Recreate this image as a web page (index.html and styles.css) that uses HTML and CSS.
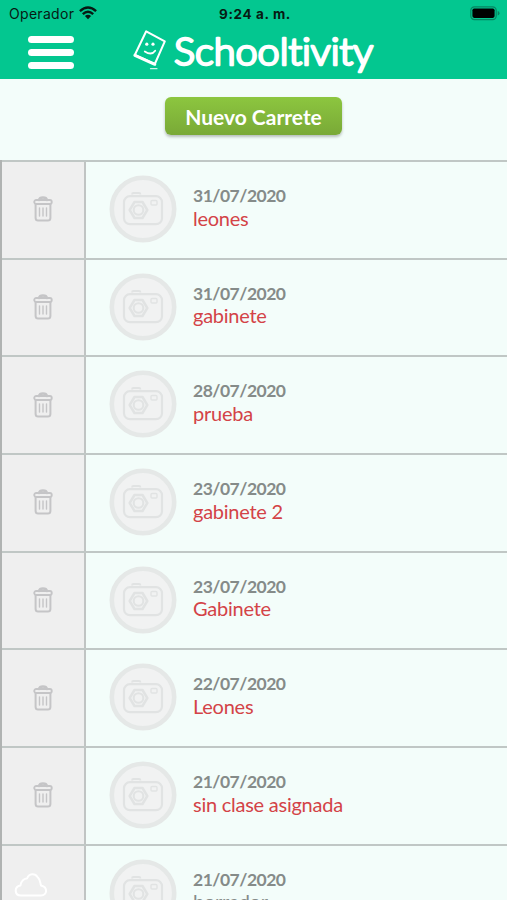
FILE: index.html
```html
<!DOCTYPE html>
<html lang="es">
  <head>
    <meta charset="UTF-8" />
    <meta name="viewport" content="width=device-width, initial-scale=1.0" />
    <title>Schooltivity</title>
    <link rel="stylesheet" href="styles.css">
  </head>
  <body>
    <svg class="symbols" width="0" height="0">
      <symbol id="trash" viewBox="0 0 20 26">
        <g fill="none" stroke="#c5c5c7" stroke-linecap="round" stroke-linejoin="round">
          <path d="M6 4 Q6.5 1.5 10 1.5 T14 4" stroke-width="2.4" />
          <rect x="1.2" y="4" width="17.6" height="4" rx="2" stroke-width="1.8" />
          <path d="M2.6 8.5 V22 Q2.6 24.5 5.1 24.5 H14.9 Q17.4 24.5 17.4 22 V8.5" stroke-width="2" />
          <path d="M6.5 12 V20 M10 12 V20 M13.5 12 V20" stroke-width="1.4" />
        </g>
      </symbol>
      <symbol id="camera" viewBox="0 0 68 68">
        <circle cx="34" cy="34" r="31.2" fill="#f1f2f2" stroke="#e5e8e7" stroke-width="4.6" />
        <g fill="none" stroke="#e1e3e3">
          <path d="M23 19.5 Q23 18 24.5 18 H30 Q31.5 18 31.5 19.5" stroke-width="1.8" />
          <rect x="15" y="21.2" width="38" height="28" rx="6" stroke-width="2.2" />
          <path d="M25.5 27 H33.5 L38.3 35 L33.5 43 H25.5 L20.7 35 Z" stroke-width="2.5" stroke-linejoin="round" />
          <circle cx="29.5" cy="35" r="4.8" stroke-width="2.1" />
          <rect x="42" y="25.5" width="6" height="4.5" rx="1" stroke-width="1.4" />
        </g>
      </symbol>
    </svg>

    <header class="header">
      <div class="status-bar">
        <div class="carrier">
          <span>Operador</span>
          <svg class="wifi" width="18" height="14" viewBox="0 0 18 14">
            <g fill="none" stroke="#071a13" stroke-width="2.4">
              <path d="M.9 5.1 Q9-2.3 17.1 5.1" />
              <path d="M3.8 8.2 Q9 3.5 14.2 8.2" />
            </g>
            <path d="M5.9 10 Q9 7.5 12.1 10 L9 13.3 Z" fill="#071a13" />
          </svg>
        </div>
        <span class="clock">9:24 a. m.</span>
        <svg class="battery" width="31" height="15" viewBox="0 0 31 15">
          <rect x=".8" y=".8" width="25.4" height="12.8" rx="3.6" fill="none" stroke="#078561" stroke-width="1.2" />
          <rect x="2.4" y="2.5" width="22.2" height="9.4" rx="1.8" fill="#000" />
          <path d="M27.7 5 Q29.5 5.5 29.5 7.2 T27.7 9.4 Z" fill="#078561" />
        </svg>
      </div>
      <div class="nav">
        <button class="menu" aria-label="Menu">
          <span></span>
          <span></span>
          <span></span>
        </button>
        <svg class="logo" width="250" height="54" viewBox="0 0 250 54">
          <g fill="none" stroke="#fff" stroke-linecap="round" stroke-linejoin="round">
            <path d="M16.2 6.3 L34.8 16.3 L24.8 39 L4.8 30 Z" stroke-width="2" />
            <path d="M4.9 30.4 L24.8 39.3" stroke-width="3" />
            <path d="M14.8 26.4 Q21.5 31 25.2 25.8" stroke-width="1.8" />
            <path d="M20.5 43.7 H27" stroke-width="1.2" opacity=".8" />
          </g>
          <circle cx="16.8" cy="19.2" r="1.6" fill="#fff" />
          <circle cx="23" cy="19.2" r="1.6" fill="#fff" />
          <text class="logo-text" x="44" y="40" textLength="199" lengthAdjust="spacingAndGlyphs">Schooltivity</text>
        </svg>
      </div>
    </header>

    <div class="actions">
      <button class="new-button">Nuevo Carrete</button>
    </div>

    <ul class="list">
      <li class="row">
        <div class="delete"><svg class="trash"><use href="#trash" /></svg></div>
        <svg class="camera"><use href="#camera" /></svg>
        <div class="info"><span class="date">31/07/2020</span><span class="name">leones</span></div>
      </li>
      <li class="row">
        <div class="delete"><svg class="trash"><use href="#trash" /></svg></div>
        <svg class="camera"><use href="#camera" /></svg>
        <div class="info"><span class="date">31/07/2020</span><span class="name">gabinete</span></div>
      </li>
      <li class="row">
        <div class="delete"><svg class="trash"><use href="#trash" /></svg></div>
        <svg class="camera"><use href="#camera" /></svg>
        <div class="info"><span class="date">28/07/2020</span><span class="name">prueba</span></div>
      </li>
      <li class="row">
        <div class="delete"><svg class="trash"><use href="#trash" /></svg></div>
        <svg class="camera"><use href="#camera" /></svg>
        <div class="info"><span class="date">23/07/2020</span><span class="name">gabinete 2</span></div>
      </li>
      <li class="row">
        <div class="delete"><svg class="trash"><use href="#trash" /></svg></div>
        <svg class="camera"><use href="#camera" /></svg>
        <div class="info"><span class="date">23/07/2020</span><span class="name">Gabinete</span></div>
      </li>
      <li class="row">
        <div class="delete"><svg class="trash"><use href="#trash" /></svg></div>
        <svg class="camera"><use href="#camera" /></svg>
        <div class="info"><span class="date">22/07/2020</span><span class="name">Leones</span></div>
      </li>
      <li class="row">
        <div class="delete"><svg class="trash"><use href="#trash" /></svg></div>
        <svg class="camera"><use href="#camera" /></svg>
        <div class="info"><span class="date">21/07/2020</span><span class="name">sin clase asignada</span></div>
      </li>
      <li class="row">
        <div class="delete cloud-cell">
          <svg class="cloud" width="34" height="26" viewBox="0 0 34 26">
            <path d="M7 23.5 C0 23.5 0 14.5 6.5 13.5 C7 8 11 6.5 13 6.5 C15 1 21 1 23.5 5 C26 7 26 10 27 13.5 C34 15 33.5 23.5 27 23.5 Z" fill="none" stroke="#fff" stroke-width="2" stroke-linejoin="round" />
          </svg>
        </div>
        <svg class="camera"><use href="#camera" /></svg>
        <div class="info"><span class="date">21/07/2020</span><span class="name draft">borrador</span></div>
      </li>
    </ul>
  </body>
</html>
```

FILE: styles.css
```css
* {
  box-sizing: border-box;
}

body {
  margin: 0;
  height: 900px;
  overflow: hidden;
  font-family: Lato, sans-serif;
  background: #f3fdfa;
}

.symbols {
  display: block;
  height: 0;
}

.header {
  height: 79px;
  background: #03c790;
}

.status-bar {
  display: grid;
  grid-template-columns: 1fr auto 1fr;
  align-items: center;
  height: 27px;
  padding: 0 6px 0 9px;
  font-family: Inter, sans-serif;
  color: #071a13;
}

.carrier {
  display: flex;
  align-items: center;
  gap: 5px;
  font-size: 14px;
  letter-spacing: 0.3px;
}

.wifi {
  margin-top: -2px;
}

.clock {
  font-size: 13.5px;
  font-weight: 700;
  letter-spacing: 0.6px;
}

.battery {
  justify-self: end;
}

.nav {
  display: flex;
  align-items: flex-start;
  height: 52px;
  padding-left: 28px;
}

.menu {
  display: flex;
  flex-direction: column;
  gap: 6px;
  width: 46px;
  margin-top: 9px;
  padding: 0;
  border: none;
  background: none;
}

.menu span {
  height: 7px;
  border-radius: 4px;
  background: #fff;
}

.logo {
  margin-left: 56px;
  margin-top: -2px;
}

.logo-text {
  font-family: Lato, sans-serif;
  font-size: 37px;
  font-weight: 300;
  font-variant-ligatures: none;
  fill: #fff;
  stroke: #fff;
  stroke-width: 2.5px;
  stroke-linejoin: round;
}

.actions {
  display: flex;
  justify-content: center;
  align-items: flex-start;
  height: 81px;
  padding-top: 18px;
}

.new-button {
  width: 177px;
  height: 38px;
  padding: 0;
  font-family: Lato, sans-serif;
  font-size: 21px;
  font-weight: 700;
  color: #fff;
  background: linear-gradient(#8cc63f, #79a937);
  border: none;
  border-radius: 6px;
  box-shadow: 0 2px 3px rgba(0, 0, 0, 0.25);
}

.list {
  margin: 0;
  padding: 0;
  list-style: none;
  border-left: 2px solid #b0b3b2;
}

.row {
  display: flex;
  height: 97.7px;
  border-top: 2px solid #c0c7c5;
}

.delete {
  display: flex;
  justify-content: center;
  align-items: center;
  width: 84px;
  padding-bottom: 1px;
  border-right: 2px solid #c0c4c3;
  background: #efefef;
}

.trash {
  width: 20px;
  height: 26px;
}

.camera {
  flex-shrink: 0;
  width: 68px;
  height: 68px;
  margin: 13px 16px 0 23px;
}

.info {
  display: flex;
  flex-direction: column;
  padding-top: 23px;
  line-height: 22px;
}

.date {
  font-size: 17.5px;
  font-weight: 700;
  letter-spacing: -0.5px;
  color: #858b89;
}

.name {
  margin-top: -0.5px;
  font-size: 20px;
  letter-spacing: -0.25px;
  color: #d34347;
}

.name.draft {
  color: #858b89;
}

.cloud-cell {
  justify-content: flex-start;
  align-items: flex-start;
  padding: 26px 0 0 12px;
}
```
